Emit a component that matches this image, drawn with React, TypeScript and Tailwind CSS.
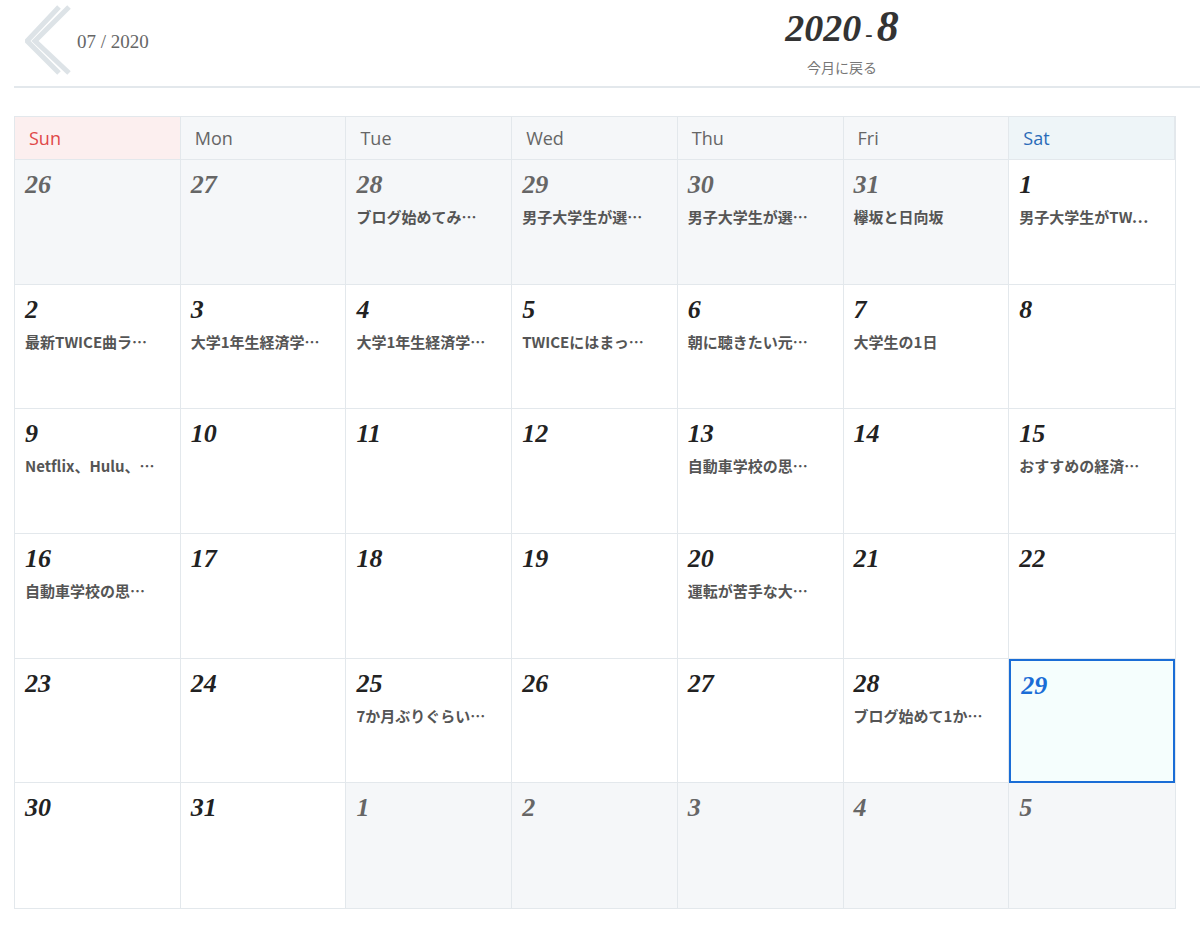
import React from "react";

type Cell = { d: number; t?: string; out?: boolean; today?: boolean };
const rows: Cell[][] = [
  [{ d: 26, out: true }, { d: 27, out: true }, { d: 28, out: true, t: "ブログ始めてみ…" }, { d: 29, out: true, t: "男子大学生が選…" }, { d: 30, out: true, t: "男子大学生が選…" }, { d: 31, out: true, t: "欅坂と日向坂" }, { d: 1, t: "男子大学生がTW…" }],
  [{ d: 2, t: "最新TWICE曲ラ…" }, { d: 3, t: "大学1年生経済学…" }, { d: 4, t: "大学1年生経済学…" }, { d: 5, t: "TWICEにはまっ…" }, { d: 6, t: "朝に聴きたい元…" }, { d: 7, t: "大学生の1日" }, { d: 8 }],
  [{ d: 9, t: "Netflix、Hulu、…" }, { d: 10 }, { d: 11 }, { d: 12 }, { d: 13, t: "自動車学校の思…" }, { d: 14 }, { d: 15, t: "おすすめの経済…" }],
  [{ d: 16, t: "自動車学校の思…" }, { d: 17 }, { d: 18 }, { d: 19 }, { d: 20, t: "運転が苦手な大…" }, { d: 21 }, { d: 22 }],
  [{ d: 23 }, { d: 24 }, { d: 25, t: "7か月ぶりぐらい…" }, { d: 26 }, { d: 27 }, { d: 28, t: "ブログ始めて1か…" }, { d: 29, today: true }],
  [{ d: 30 }, { d: 31 }, { d: 1, out: true }, { d: 2, out: true }, { d: 3, out: true }, { d: 4, out: true }, { d: 5, out: true }],
];
const days = ["Sun", "Mon", "Tue", "Wed", "Thu", "Fri", "Sat"];
const serif = { fontFamily: '"Liberation Serif", serif' };
const sans = { fontFamily: '"Noto Sans CJK JP", "Noto Sans", sans-serif' };

export default function App() {
  return (
    <div className="w-[1200px] h-[951px] bg-white">
      <div className="ml-[14px] h-[88px] border-b-2 border-[#e3e8ec] flex relative">
        <div className="flex items-center h-[80px] pl-[11px]">
          <svg width="48" height="72" viewBox="0 0 48 72">
            <polyline points="44,3 10,37 44,69" fill="none" stroke="#dde3e7" strokeWidth="5" />
            <polyline points="34,3 2,37 34,69" fill="none" stroke="#dde3e7" strokeWidth="5" />
          </svg>
          <span className="ml-[4px] text-[19px] text-[#666] mt-[4px]" style={serif}>07 / 2020</span>
        </div>
        <div className="absolute left-[678px] top-[2px] w-[300px] flex flex-col items-center">
          <div className="text-[38px] leading-[50px] font-bold italic text-[#333]" style={serif}>2020<span className="text-[22px] not-italic mx-[4px]">-</span><span className="text-[44px]">8</span></div>
          <div className="text-[14px] text-[#777] mt-[-2px]" style={sans}>今月に戻る</div>
        </div>
      </div>
      <div className="ml-[14px] w-[1162px] mt-[28px] border border-[#e3e8ec] grid grid-cols-7">
        {days.map((d, i) => (
          <div key={d} className={`h-[43px] flex items-center pl-[14px] text-[18px] border-r border-b border-[#e3e8ec] last:border-r-0 ${i === 0 ? "bg-[#fcefef] text-[#e04848]" : i === 6 ? "bg-[#eef5f8] text-[#2a6bb8]" : "bg-[#f5f7f9] text-[#666]"}`} style={{ fontFamily: '"Open Sans", sans-serif' }}>{d}</div>
        ))}
        {rows.flat().map((c, i) => (
          <div key={i} className={`h-[124.7px] pl-[10px] pt-[10px] ${c.today ? "border-2 border-[#1a6dd6] bg-[#f5fefd]" : `border-[#e3e8ec] ${i % 7 !== 6 ? "border-r" : ""} ${i < 35 ? "border-b" : ""} ${c.out ? "bg-[#f5f7f9]" : "bg-white"}`}`}>
            <div className={`text-[26px] leading-[30px] font-bold italic ${c.today ? "text-[#1a6dd6]" : c.out ? "text-[#666]" : "text-[#222]"}`} style={serif}>{c.d}</div>
            {c.t && <div className="mt-[6px] text-[15px] font-bold text-[#555] whitespace-nowrap" style={sans}>{c.t}</div>}
          </div>
        ))}
      </div>
    </div>
  );
}
